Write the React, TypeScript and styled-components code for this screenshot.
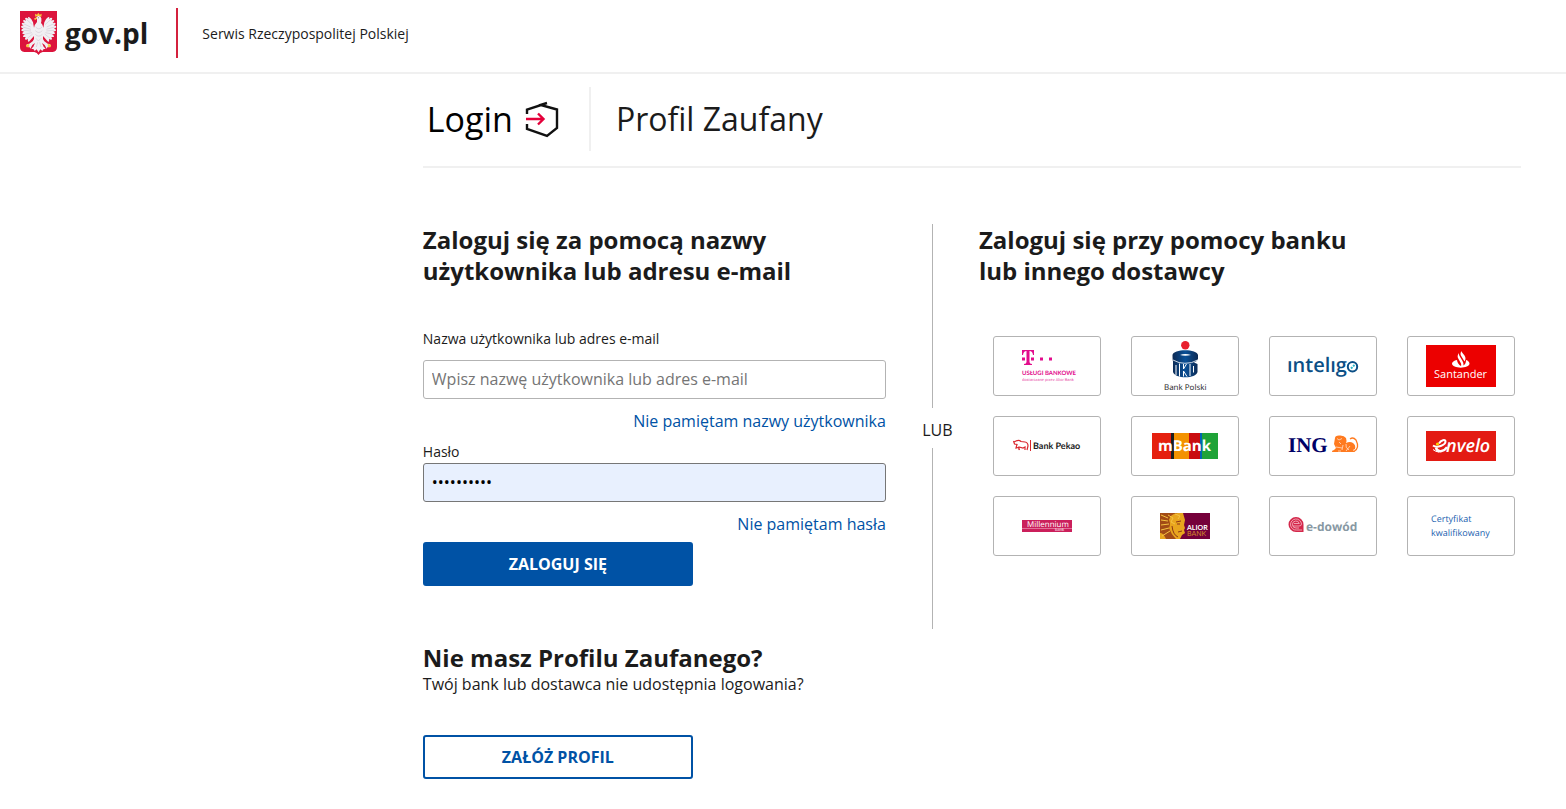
import React from "react";
import styled, { createGlobalStyle } from "styled-components";

const GlobalStyle = createGlobalStyle`
  *, *::before, *::after { box-sizing: border-box; }
  body {
    margin: 0;
    background: #fff;
    color: #1b1b1b;
    font-family: "Open Sans", "Noto Sans", sans-serif;
    font-size: 16px;
    line-height: 24px;
  }
  h1, h2, p { margin: 0; }
`;

const blue = "#0052a5";

const TopBar = styled.header`
  display: flex;
  align-items: flex-start;
  height: 74px;
  padding: 8px 20px 0;
  border-bottom: 2px solid #f0f0f0;
`;

const Brand = styled.a`
  display: flex;
  align-items: center;
  gap: 8px;
  height: 50px;
  padding-right: 28px;
  border-right: 2px solid #d4213d;
  color: #1b1b1b;
  font-size: 28px;
  font-weight: 700;
  line-height: 40px;
  text-decoration: none;
`;

const Tagline = styled.span`
  padding-left: 24px;
  font-size: 14px;
  line-height: 52px;
`;

const Page = styled.main`
  margin: 0 45px 0 27%;
`;

const TitleBar = styled.div`
  display: flex;
  align-items: center;
  height: 94px;
  padding-bottom: 2px;
  border-bottom: 2px solid #f0f0f0;
`;

const LoginMark = styled.div`
  display: flex;
  align-items: center;
  gap: 12px;
  height: 64px;
  padding: 0 30px 0 4px;
  border-right: 2px solid #f0f0f0;
  color: #000;
  font-size: 34px;
  font-weight: 400;
  line-height: 48px;
`;

const Title = styled.h1`
  padding-left: 25px;
  font-size: 32px;
  font-weight: 400;
  line-height: 48px;
`;

const Columns = styled.div`
  display: grid;
  grid-template-columns: 463fr 93fr 542fr;
  margin-top: 56px;
  min-height: 405px;
`;

const Heading = styled.h2`
  font-size: 24px;
  font-weight: 700;
  line-height: 31px;
`;

const Form = styled.form`
  display: flex;
  flex-direction: column;
`;

const Label = styled.label`
  font-size: 14px;
  line-height: 20px;
`;

const TextInput = styled.input<{ $filled?: boolean }>`
  width: 100%;
  height: 39px;
  padding: 0 8px 2px;
  border: 1px solid ${(p) => (p.$filled ? "#767676" : "#b3b3b3")};
  border-radius: 3px;
  background: ${(p) => (p.$filled ? "#e8f0fe" : "#fff")};
  color: #000;
  font: inherit;
  &::placeholder { color: #757575; opacity: 1; }
`;

const HelpLink = styled.a`
  align-self: flex-end;
  margin-top: 10px;
  color: ${blue};
  text-decoration: none;
`;

const Button = styled.button<{ $outline?: boolean }>`
  width: 270px;
  height: 44px;
  border: 2px solid ${blue};
  border-radius: 3px;
  background: ${(p) => (p.$outline ? "#fff" : blue)};
  color: ${(p) => (p.$outline ? blue : "#fff")};
  font: inherit;
  font-weight: 700;
  cursor: pointer;
`;

const Field = styled.div<{ $gap: number }>`
  display: flex;
  flex-direction: column;
  ${Label} { margin-bottom: ${(p) => p.$gap}px; }
  & + & { margin-top: 9px; }
`;

const Fields = styled.div`
  display: flex;
  flex-direction: column;
  margin-top: 43px;
  ${Button} { margin-top: 6px; }
`;

const Divider = styled.div`
  display: flex;
  flex-direction: column;
  align-items: center;
  &::before, &::after {
    content: "";
    width: 1px;
    background: #b3b3b3;
  }
  &::before { height: 184px; }
  &::after { flex: 1; }
`;

const DividerText = styled.span`
  height: 40px;
  padding-left: 10px;
  line-height: 44px;
`;

const ProviderGrid = styled.div`
  display: grid;
  grid-template-columns: repeat(auto-fill, 108px);
  gap: 20px 30px;
  margin-top: 50px;
  padding-left: 14px;
`;

const Tile = styled.button`
  height: 60px;
  padding: 0;
  border: 1px solid #b3b3b3;
  border-radius: 3px;
  background: #fff;
  cursor: pointer;
  svg { display: block; }
`;

const Register = styled.section`
  padding: 13px 0 30px;
  p { line-height: 22px; }
  ${Button} { margin-top: 40px; }
`;

const Crest = () => (
  <svg width="37" height="44" viewBox="0 0 111 132" aria-hidden="true">
    <path d="M0 0H111V108Q111 122 98 123H68Q60 124 55.500 132Q51 124 43 123H13Q0 122 0 108Z" fill="#dc143c" />
    <g fill="#f1eff3">
      <path d="M51 33Q44 40 42 50L39 34Q36 24 28 19Q26 17 24 18L25 24Q19 18 15 22L18 29Q10 25 9 30L14 36Q5 34 5 39L11 44Q2 43 3 49L10 53Q3 53 4 59L12 62Q5 64 8 69L15 70Q8 73 9 78L17 78Q13 83 17 87L24 84Q22 90 26 93L34 84L42 75Q44 86 38 91L28 98Q18 99 18 104L25 102L21 109L28 107L31 113L37 102L45 96L40 107L34 113L41 115L44 120L50 115L55.500 124L61 115L67 120L70 115L77 113L71 107L66 96L74 102L80 113L83 107L90 109L86 102L93 104Q93 99 83 98L73 91Q67 86 69 75L77 84L85 93Q89 90 87 84L94 87Q98 83 94 78L102 78Q103 73 96 70L104 69Q107 64 100 62L108 59Q109 53 102 53L109 49Q110 43 101 44L107 39Q107 34 98 36L103 30Q102 25 94 29L97 22Q93 18 87 24L88 18Q86 17 84 19Q76 24 73 34L70 50Q68 40 63 36Q65 30 64 22Q62 14 54 15L43 24L51 23Z" />
    </g>
    <g fill="none" stroke="#c9bfcd" strokeWidth="1.500">
      <path d="M10 38L32 48M8 48L33 55M10 58L33 60M16 69L36 65M22 82L38 69M20 26L37 41M102 38L80 48M104 48L79 55M102 58L79 60M96 69L76 65M90 82L74 69M92 26L75 41M47 48Q56 59 66 48M46 59Q56 70 67 59M46 70Q56 81 67 70M48 82L55 90L63 82M49 108L53 94M63 108L59 94" />
    </g>
    <g fill="#f7c83c">
      <path d="M46 17L45 8L51 11L55 5L59 11L65 8L64 17Q55 13 46 17Z" />
      <path d="M51 19L42 23L45 27L51 23ZM18 102L26 99L29 102L26 105L28 111L23 107L19 109ZM93 102L85 99L82 102L85 105L83 111L88 107L92 109Z" />
    </g>
    <circle cx="55" cy="20" r="1.500" fill="#5d3e4c" />
  </svg>
);

const LoginIcon = () => (
  <svg width="34" height="38" viewBox="0 0 34 38" fill="none" strokeWidth="2.400" aria-hidden="true">
    <path d="M2 14V9.500L16 5L32 9.500V28L22 36L2 29V24M14 5.500L22 3" stroke="#111" />
    <path d="M1 19H18M13 13.500L18.500 19L13 24.500" stroke="#e4003a" />
  </svg>
);

const Logo = ({ children }: { children: React.ReactNode }) => (
  <svg width="106" height="58" viewBox="0 0 106 58" textRendering="geometricPrecision" aria-hidden="true">
    {children}
  </svg>
);

const open = "Open Sans, sans-serif";
const lato = "Lato, sans-serif";
const roboto = "Roboto, sans-serif";

const TMobile = () => (
  <Logo>
    <g fill="#e20d8c">
      <path d="M28 13H40V18H39Q38.500 14 35.500 14V25Q35.500 27 38 27V28H30V27Q32.500 27 32.500 25V14Q29.500 14 29 18H28Z" />
      <path d="M28 20.500h3v3h-3zM37 20.500h3v3h-3zM46 20.500h3v3h-3zM55 20.500h3v3h-3z" />
      <text x="28" y="38" fontFamily={lato} fontSize="6" fontWeight="700">USŁUGI BANKOWE</text>
      <text x="28" y="44" fontFamily={roboto} fontSize="4" opacity="0.75">dostarczane przez Alior Bank</text>
    </g>
  </Logo>
);

const Pko = () => (
  <Logo>
    <defs>
      <linearGradient id="pko" x1="0" x2="1" y1="0" y2="0">
        <stop offset="0" stopColor="#0c2a54" />
        <stop offset="0.5" stopColor="#0a5096" />
        <stop offset="1" stopColor="#0c2a54" />
      </linearGradient>
    </defs>
    <circle cx="53.300" cy="8.300" r="4.200" fill="#e8202d" />
    <path d="M40.500 18C41 11.500 65.500 11.500 66 18V22Q65 25 62 25.500L65.500 27V35C64 42 43 42 41 35V24.500Q40.500 23 40.500 18Z" fill="url(#pko)" />
    <path d="M48 18Q53 16 59 18Q53 19.500 48 18Z" fill="#fff" />
    <path d="M41 23Q47 26.500 53 26.300Q60 26.500 65.500 23" stroke="#fff" strokeWidth="0.800" fill="none" />
    <path d="M44 28V38M47.500 26.500V39.500M51.500 27V32L54.500 27M51.500 39.500V34L55 39.500M58 27V39M61.500 29V35.500" stroke="#fff" strokeWidth="1" fill="none" />
    <text x="32" y="53" fill="#222" fontFamily={open} fontSize="8" fontWeight="500">Bank Polski</text>
  </Logo>
);

const Inteligo = () => (
  <Logo>
    <text x="17" y="35" fill="#0b4f86" fontFamily={open} fontSize="20" fontWeight="600">ıntelıg</text>
    <circle cx="82.500" cy="29.700" r="4.700" fill="#fff" stroke="#0b4f86" strokeWidth="2" />
    <path d="M81 31.500L84.500 28" stroke="#28b4c8" strokeWidth="2" strokeDasharray="2 1" />
  </Logo>
);

const Santander = () => (
  <Logo>
    <path fill="#ec0000" d="M18 8h70v42H18z" />
    <path fill="#fff" d="M49 23C46 23.500 44 25 44 26.500C44 32 61.500 32 61.500 26.500C61.500 25 60 23.500 58 23Q58 27 55.500 28.500Q56 26.500 54.500 24L51.500 19Q50.500 17 51 16Q48.500 19 50.500 22L53 26.500Q53.500 28 53 29Q49.500 27 49 23ZM53.500 14Q51.500 17 53.500 19.500L56.500 24.500Q58.500 21.500 56.500 18.500L54.500 16Q53.500 15 53.500 14Z" />
    <text x="26" y="41" fill="#fff" fontFamily={open} fontSize="11" fontWeight="500">Santander</text>
  </Logo>
);

const Pekao = () => (
  <Logo>
    <path d="M19.500 24L20.500 27L23 27.500L22 31L24.500 30.500L25.500 33M25 33V30L29 31L31 30V33M33 33L34 29Q34 25.500 31 25L27 24.500Q25 22.500 22 24L20 25" fill="none" stroke="#d9272e" strokeWidth="1.200" />
    <path d="M36.500 23v11" stroke="#d9272e" strokeWidth="1" />
    <text x="39" y="32" fill="#222" fontFamily={lato} fontSize="9" fontWeight="700">Bank Pekao</text>
  </Logo>
);

const MBank = () => (
  <Logo>
    <path fill="#e5200f" d="M20 16h19v26H20z" />
    <path fill="#1d1d1b" d="M39 16h3v26h-3z" />
    <path fill="#f39200" d="M42 16h15v26H42z" />
    <path fill="#c90c0f" d="M57 16h11v26H57z" />
    <path fill="#0065b1" d="M68 16h2v26h-2z" />
    <path fill="#1fa338" d="M70 16h16v26H70z" />
    <text x="26" y="34" fill="#fff" fontFamily={open} fontSize="15" fontWeight="700">mBank</text>
  </Logo>
);

const Ing = () => (
  <Logo>
    <text x="18" y="35" fill="#000066" fontFamily="Liberation Serif, serif" fontSize="21" fontWeight="700">ING</text>
    <path d="M65 21Q65 18.500 69 18.500Q74 18 76 21Q77 24 76 26Q80 24 83 26Q86 28 85 32L83 33L85 35H62Q61.500 33.500 64 33L66 31L64 27Z" fill="#ff7a1f" />
    <path d="M80 22Q83 19.500 86 23Q90 31 84 34.500" fill="none" stroke="#ff7a1f" strokeWidth="1.300" />
    <path d="M67 21.500L69 23L72 21.500M69 25L71 27M66 30L72 31M73 28L72 33M76 27Q75 31 79 33M80 29L76 34M68 34H71" fill="none" stroke="#fff" strokeWidth="0.600" />
  </Logo>
);

const Envelo = () => (
  <Logo>
    <path fill="#e31b13" d="M18 14h70v30H18z" />
    <path d="M25 28.500C29 31.500 37.500 28 37.500 24.500C37.500 22 33 23 31 26.500" fill="none" stroke="#fff" strokeWidth="2" />
    <path d="M28 30.500C29 36 36 35 39 30" fill="none" stroke="#fff" strokeWidth="2.400" />
    <path d="M25 32.500Q28 35 31 35" fill="none" stroke="#fff" strokeWidth="1" />
    <circle cx="29.500" cy="27" r="1.600" fill="#ffd400" />
    <text x="38" y="35" fill="#fff" fontFamily={open} fontSize="18" fontWeight="600" fontStyle="italic">nvelo</text>
  </Logo>
);

const Millennium = () => (
  <Logo>
    <path fill="#cb1f5b" d="M28 23h50v12H28z" />
    <text x="33" y="30" fill="#fff" fontFamily={open} fontSize="8" fontWeight="500">Millennium</text>
    <path d="M28 31.500h50" stroke="#f0a8c2" strokeWidth="0.600" />
    <text x="61" y="34" fill="#fff" fontFamily={open} fontSize="4">bank</text>
  </Logo>
);

const Alior = () => (
  <Logo>
    <path fill="#75003a" d="M28 16h50v26H28z" />
    <path fill="#e8a51e" d="M28 16h25v26H28z" />
    <path fill="#a24b16" d="M28 16H46Q38 17 37 23Q39 27 37 31Q39 37 44 42H34Q31 35 28 36Z" />
    <path d="M29 18L36 21M29 23L36 24M29 28L37 27M29 33L37 31M30 39L38 34M36 18L41 21L39 25L43 27M43 17L48 19L46 22" stroke="#f5c342" strokeWidth="1" fill="none" />
    <path fill="#75003a" d="M51 16H53V42H48L50 38L53 36L52 33L53 31L52 28L53 23Z" />
    <path d="M44 25L49 24M45 27H48M46 35L50 34M40 29Q41 38 46 40" stroke="#8b3516" strokeWidth="1" fill="none" />
    <text x="55" y="33" fill="#fff" fontFamily={lato} fontSize="7" fontWeight="700">ALIOR</text>
    <text x="55" y="39" fill="#d48b2a" fontFamily={lato} fontSize="7">BANK</text>
  </Logo>
);

const EDowod = () => (
  <Logo>
    <path d="M33.500 35H26A7.500 7.500 0 1 1 33.500 27.500Z" fill="#d4284b" />
    <path d="M32 33H26.500A5.500 5.500 0 1 1 31.500 27Q31.500 29 29 29H23M29 31H26A3.500 3.500 0 1 1 29.300 26.500H24" fill="none" stroke="#f6bdc8" strokeWidth="0.800" />
    <text x="36" y="34" fill="#8798a3" fontFamily={open} fontSize="12" fontWeight="700">e-dowód</text>
  </Logo>
);

const Certificate = () => (
  <Logo>
    <g fill="#235fb0" fontFamily={open} fontSize="9">
      <text x="23" y="25">Certyfikat</text>
      <text x="23" y="39">kwalifikowany</text>
    </g>
  </Logo>
);

const providers = [
  { name: "T-Mobile Usługi Bankowe", Mark: TMobile },
  { name: "PKO Bank Polski", Mark: Pko },
  { name: "Inteligo", Mark: Inteligo },
  { name: "Santander", Mark: Santander },
  { name: "Bank Pekao", Mark: Pekao },
  { name: "mBank", Mark: MBank },
  { name: "ING", Mark: Ing },
  { name: "Envelo", Mark: Envelo },
  { name: "Millennium Bank", Mark: Millennium },
  { name: "Alior Bank", Mark: Alior },
  { name: "e-dowód", Mark: EDowod },
  { name: "Certyfikat kwalifikowany", Mark: Certificate },
];

export default function App() {
  return (
    <>
      <GlobalStyle />
      <TopBar>
        <Brand href="#"><Crest />gov.pl</Brand>
        <Tagline>Serwis Rzeczypospolitej Polskiej</Tagline>
      </TopBar>
      <Page>
        <TitleBar>
          <LoginMark>Login<LoginIcon /></LoginMark>
          <Title>Profil Zaufany</Title>
        </TitleBar>
        <Columns>
          <Form onSubmit={(e) => e.preventDefault()}>
            <Heading>Zaloguj się za pomocą nazwy<br />użytkownika lub adresu e-mail</Heading>
            <Fields>
              <Field $gap={11}>
                <Label htmlFor="login">Nazwa użytkownika lub adres e-mail</Label>
                <TextInput id="login" type="text" placeholder="Wpisz nazwę użytkownika lub adres e-mail" />
                <HelpLink href="#">Nie pamiętam nazwy użytkownika</HelpLink>
              </Field>
              <Field $gap={1}>
                <Label htmlFor="password">Hasło</Label>
                <TextInput id="password" type="password" defaultValue="haslohaslo" $filled />
                <HelpLink href="#">Nie pamiętam hasła</HelpLink>
              </Field>
              <Button type="submit">ZALOGUJ SIĘ</Button>
            </Fields>
          </Form>
          <Divider><DividerText>LUB</DividerText></Divider>
          <section>
            <Heading>Zaloguj się przy pomocy banku<br />lub innego dostawcy</Heading>
            <ProviderGrid>
              {providers.map(({ name, Mark }) => (
                <Tile key={name} type="button" aria-label={name}><Mark /></Tile>
              ))}
            </ProviderGrid>
          </section>
        </Columns>
        <Register>
          <Heading>Nie masz Profilu Zaufanego?</Heading>
          <p>Twój bank lub dostawca nie udostępnia logowania?</p>
          <Button type="button" $outline>ZAŁÓŻ PROFIL</Button>
        </Register>
      </Page>
    </>
  );
}
